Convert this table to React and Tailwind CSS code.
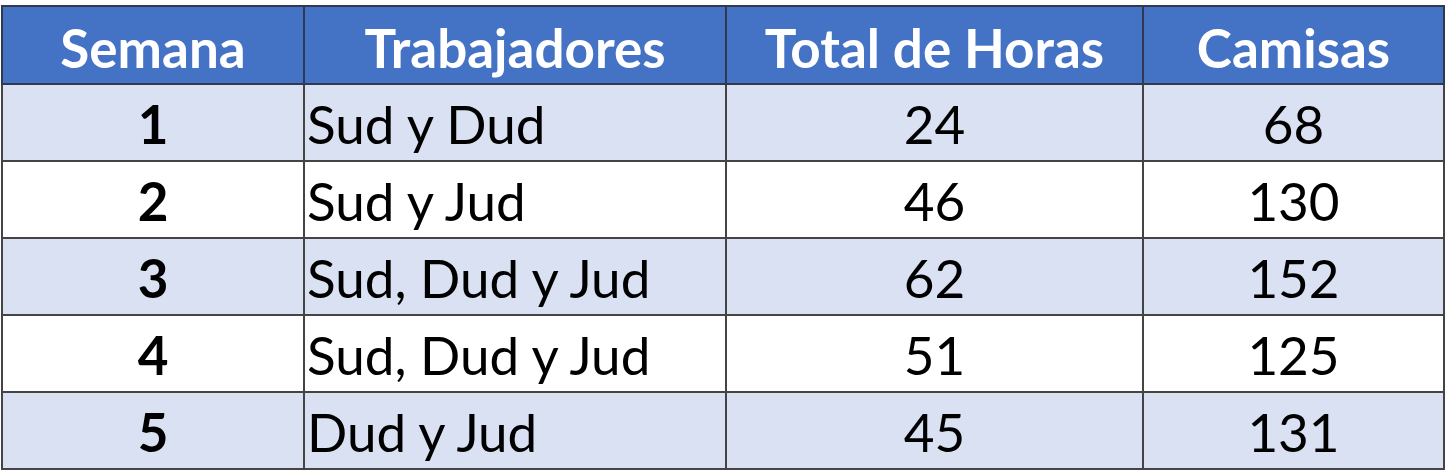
const rows = [
  { semana: '1', trabajadores: 'Sud y Dud', horas: '24', camisas: '68' },
  { semana: '2', trabajadores: 'Sud y Jud', horas: '46', camisas: '130' },
  { semana: '3', trabajadores: 'Sud, Dud y Jud', horas: '62', camisas: '152' },
  { semana: '4', trabajadores: 'Sud, Dud y Jud', horas: '51', camisas: '125' },
  { semana: '5', trabajadores: 'Dud y Jud', horas: '45', camisas: '131' },
];

const App = () => {
  return (
    <div className="w-[1446px] h-[476px] bg-white pt-[5px] pl-[1px] font-['Lato','Noto_Sans',sans-serif]">
      <table className="border-collapse w-[1442px] table-fixed text-[53px] leading-none">
        <colgroup>
          <col className="w-[302px]" />
          <col className="w-[422px]" />
          <col className="w-[417px]" />
          <col className="w-[301px]" />
        </colgroup>
        <thead>
          <tr className="h-[78px] bg-[#4472c4] text-white font-bold">
            <th className="border-2 border-[#2f3a4f] text-center pt-[4px]">Semana</th>
            <th className="border-2 border-[#2f3a4f] text-center pt-[4px]">Trabajadores</th>
            <th className="border-2 border-[#2f3a4f] text-center pt-[4px]">Total de Horas</th>
            <th className="border-2 border-[#2f3a4f] text-center pt-[4px]">Camisas</th>
          </tr>
        </thead>
        <tbody>
          {rows.map((r, i) => (
            <tr key={r.semana} className={`h-[77px] text-black ${i % 2 === 0 ? 'bg-[#d9e1f2]' : 'bg-white'}`}>
              <td className="border-2 border-[#444] text-center font-bold pt-[2px]">{r.semana}</td>
              <td className="border-2 border-[#444] text-left pl-[2px] pt-[2px]">{r.trabajadores}</td>
              <td className="border-2 border-[#444] text-center pt-[2px]">{r.horas}</td>
              <td className="border-2 border-[#444] text-center pt-[2px]">{r.camisas}</td>
            </tr>
          ))}
        </tbody>
      </table>
    </div>
  );
};

export default App;
